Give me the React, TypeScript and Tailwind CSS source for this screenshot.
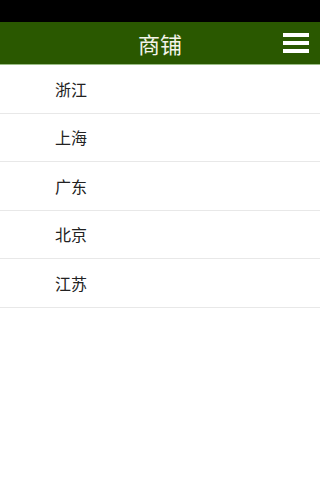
export default function App() {
  const items = ["浙江", "上海", "广东", "北京", "江苏"];
  return (
    <div className="w-[320px] h-[480px] bg-white flex flex-col" style={{ fontFamily: '"Noto Sans CJK SC", "Liberation Sans", sans-serif' }}>
      <div className="h-[22px] bg-black" />
      <div className="relative h-[43px] bg-[#2a5800] flex items-center justify-center border-b border-[#9bbd86]">
        <span className="text-[22px] text-[#f4f4ea] leading-none">商铺</span>
        <div className="absolute right-[11px] top-[11px] flex flex-col gap-[4px]">
          <div className="w-[26px] h-[4px] bg-white" />
          <div className="w-[26px] h-[4px] bg-white" />
          <div className="w-[26px] h-[4px] bg-white" />
        </div>
      </div>
      <div className="flex flex-col">
        {items.map((t) => (
          <div key={t} className="h-[48.5px] border-b border-[#e8e8e8] flex items-center pl-[55px] text-[16px] text-[#222]">
            {t}
          </div>
        ))}
      </div>
    </div>
  );
}
